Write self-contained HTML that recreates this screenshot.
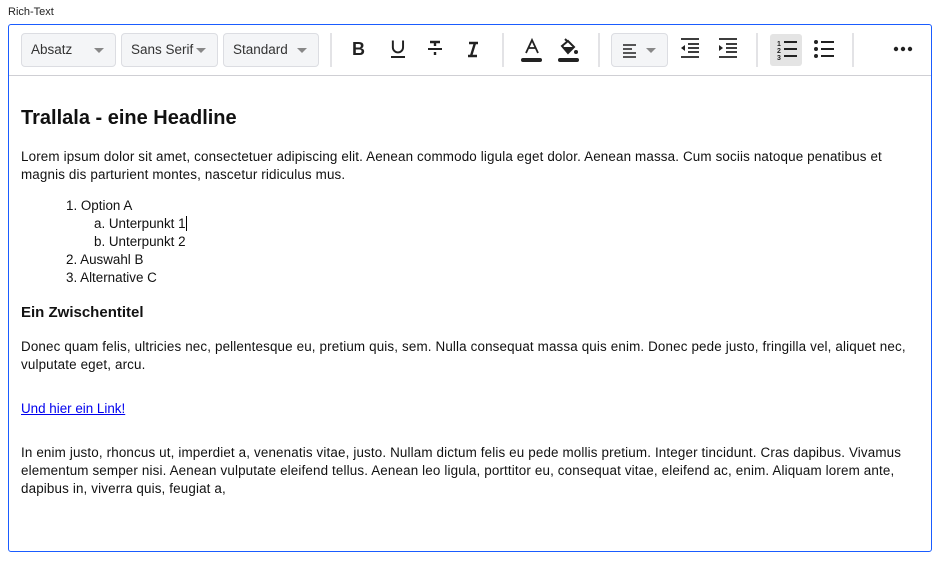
<!DOCTYPE html>
<html><head><meta charset="utf-8"><style>
*{margin:0;padding:0;box-sizing:border-box}
body{width:941px;height:566px;background:#fff;font-family:"Liberation Sans",sans-serif;color:#111;position:relative;overflow:hidden}
.a{position:absolute;white-space:nowrap}
.lbl{left:8px;top:6px;font-size:11px;color:#222}
.box{position:absolute;left:8px;top:24px;width:924px;height:528px;border:1px solid #1a5cff;border-radius:3px}
.tb{position:absolute;left:9px;top:25px;width:922px;height:51px;border-bottom:1px solid #cfcfd4}
.sel{position:absolute;top:33px;height:34px;border:1px solid #dcdde2;border-radius:4px;background:#f4f5f7;font-size:13.5px;color:#333;padding:8px 0 0 9px}
.sel i{position:absolute;right:11px;top:14px;border-left:5px solid transparent;border-right:5px solid transparent;border-top:5px solid #888}
.sep{position:absolute;top:33px;width:2px;height:34px;background:#e3e3e6}
.ic{position:absolute;top:37px}
.t{font-size:13.4px;line-height:18px}
</style></head><body>
<div class="a lbl">Rich-Text</div>
<div class="box"></div>
<div class="tb"></div>
<div class="sel" style="left:21px;width:95px">Absatz<i></i></div>
<div class="sel" style="left:121px;width:97px">Sans Serif<i></i></div>
<div class="sel" style="left:223px;width:96px">Standard<i></i></div>
<div class="sep" style="left:330px"></div>
<div class="a" style="left:352px;top:39px;font-size:18px;font-weight:bold;color:#222">B</div>
<svg class="ic" style="left:387px" width="22" height="24"><path d="M5 3v8a6 6 0 0 0 12 0V3" fill="none" stroke="#222" stroke-width="2.3" transform="translate(1.6,1) scale(0.85,0.85)"/><rect x="4" y="19" width="14" height="2" fill="#222"/></svg>
<svg class="ic" style="left:424px" width="22" height="24"><rect x="4" y="11" width="14" height="2" fill="#222"/><path d="M6 5h10M11 5v4M11 15v3" stroke="#222" stroke-width="2.4"/></svg>
<svg class="ic" style="left:462px" width="22" height="24"><path d="M7 6h9M6 19h9M13 6l-4 13" stroke="#222" stroke-width="2.4"/></svg>
<div class="sep" style="left:502px"></div>
<svg class="ic" style="left:520px" width="24" height="28"><path d="M6 16l6-13 6 13M8.5 11h7" fill="none" stroke="#222" stroke-width="1.8"/><rect x="1" y="21" width="21" height="4" rx="2" fill="#222"/></svg>
<svg class="ic" style="left:557px" width="24" height="28"><path d="M8 2l2 2M5 9l6-5 6 6-6 6z" fill="none" stroke="#222" stroke-width="2"/><path d="M5 10h12l-6 6z" fill="#222"/><circle cx="19" cy="15" r="2" fill="#222"/><rect x="1" y="21" width="21" height="4" rx="2" fill="#222"/></svg>
<div class="sep" style="left:598px"></div>
<div class="sel" style="left:611px;width:57px;top:33px"><svg style="position:absolute;left:10px;top:10px" width="16" height="14"><path d="M1 1h13M1 5h9M1 9h13M1 13h13" stroke="#222" stroke-width="1.5"/></svg><i></i></div>
<svg class="ic" style="left:680px" width="20" height="22"><path d="M1 2h18M8 7h11M8 11h11M8 15h11M1 20h18" stroke="#222" stroke-width="1.8"/><path d="M1 11l4-3v6z" fill="#222"/></svg>
<svg class="ic" style="left:718px" width="20" height="22"><path d="M1 2h18M8 7h11M8 11h11M8 15h11M1 20h18" stroke="#222" stroke-width="1.8"/><path d="M5 11l-4-3v6z" fill="#222"/></svg>
<div class="sep" style="left:756px"></div>
<div style="position:absolute;left:770px;top:34px;width:32px;height:32px;background:#e4e4e4;border-radius:3px"></div>
<svg class="ic" style="left:776px;top:38px" width="22" height="22"><path d="M8 4h13M8 11h13M8 18h13" stroke="#222" stroke-width="2"/><text x="1" y="8" font-size="7" font-family="Liberation Sans" font-weight="bold" fill="#222">1</text><text x="1" y="15" font-size="7" font-family="Liberation Sans" font-weight="bold" fill="#222">2</text><text x="1" y="22" font-size="7" font-family="Liberation Sans" font-weight="bold" fill="#222">3</text></svg>
<svg class="ic" style="left:813px;top:38px" width="22" height="22"><path d="M8 4h13M8 11h13M8 18h13" stroke="#222" stroke-width="2"/><circle cx="3" cy="4" r="2" fill="#222"/><circle cx="3" cy="11" r="2" fill="#222"/><circle cx="3" cy="18" r="2" fill="#222"/></svg>
<div class="sep" style="left:852px"></div>
<svg class="ic" style="left:893px;top:45px" width="20" height="8"><circle cx="3" cy="4" r="2.2" fill="#222"/><circle cx="10" cy="4" r="2.2" fill="#222"/><circle cx="17" cy="4" r="2.2" fill="#222"/></svg>

<div class="a" style="left:21px;top:107px;font-size:20px;font-weight:bold">Trallala - eine Headline</div>
<div class="a t" style="left:21px;top:148px;letter-spacing:0.15px">Lorem ipsum dolor sit amet, consectetuer adipiscing elit. Aenean commodo ligula eget dolor. Aenean massa. Cum sociis natoque penatibus et<br>magnis dis parturient montes, nascetur ridiculus mus.</div>
<div class="a t" style="left:66px;top:197px">1. Option A</div>
<div class="a t" style="left:94px;top:215px">a. Unterpunkt 1<span style="display:inline-block;width:1px;height:15px;background:#000;vertical-align:-3px"></span></div>
<div class="a t" style="left:94px;top:233px">b. Unterpunkt 2</div>
<div class="a t" style="left:66px;top:251px">2. Auswahl B</div>
<div class="a t" style="left:66px;top:269px">3. Alternative C</div>
<div class="a" style="left:21px;top:304px;font-size:15px;font-weight:bold">Ein Zwischentitel</div>
<div class="a t" style="left:21px;top:338px;letter-spacing:0.15px">Donec quam felis, ultricies nec, pellentesque eu, pretium quis, sem. Nulla consequat massa quis enim. Donec pede justo, fringilla vel, aliquet nec,<br>vulputate eget, arcu.</div>
<div class="a t" style="left:21px;top:400px;color:#0000ee;text-decoration:underline">Und hier ein Link!</div>
<div class="a t" style="left:21px;top:444px;letter-spacing:0.15px">In enim justo, rhoncus ut, imperdiet a, venenatis vitae, justo. Nullam dictum felis eu pede mollis pretium. Integer tincidunt. Cras dapibus. Vivamus<br>elementum semper nisi. Aenean vulputate eleifend tellus. Aenean leo ligula, porttitor eu, consequat vitae, eleifend ac, enim. Aliquam lorem ante,<br>dapibus in, viverra quis, feugiat a,</div>
</body></html>
